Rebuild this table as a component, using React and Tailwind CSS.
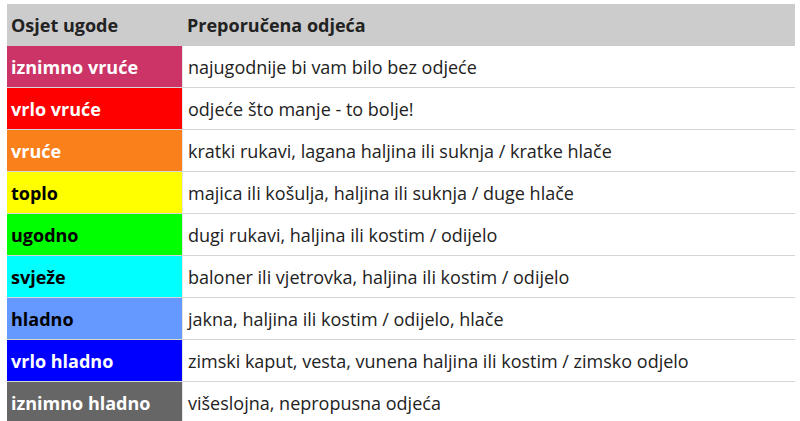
import React from "react";

const rows = [
  { label: "iznimno vruće", bg: "bg-[#cc3366]", fg: "text-white", text: "najugodnije bi vam bilo bez odjeće" },
  { label: "vrlo vruće", bg: "bg-[#ff0000]", fg: "text-white", text: "odjeće što manje - to bolje!" },
  { label: "vruće", bg: "bg-[#fa801c]", fg: "text-white", text: "kratki rukavi, lagana haljina ili suknja / kratke hlače" },
  { label: "toplo", bg: "bg-[#ffff00]", fg: "text-black", text: "majica ili košulja, haljina ili suknja / duge hlače" },
  { label: "ugodno", bg: "bg-[#00ff00]", fg: "text-black", text: "dugi rukavi, haljina ili kostim / odijelo" },
  { label: "svježe", bg: "bg-[#00ffff]", fg: "text-black", text: "baloner ili vjetrovka, haljina ili kostim / odijelo" },
  { label: "hladno", bg: "bg-[#6699ff]", fg: "text-black", text: "jakna, haljina ili kostim / odijelo, hlače" },
  { label: "vrlo hladno", bg: "bg-[#0000ff]", fg: "text-white", text: "zimski kaput, vesta, vunena haljina ili kostim / zimsko odjelo" },
  { label: "iznimno hladno", bg: "bg-[#666666]", fg: "text-white", text: "višeslojna, nepropusna odjeća" },
];

export default function App() {
  return (
    <div className="w-[800px] h-[421px] overflow-hidden bg-white pt-[4px] pl-[7px]" style={{ fontFamily: '"Open Sans", "Noto Sans", sans-serif' }}>
      <div className="w-[788px] text-[18px] leading-[24px] text-[#222]">
        <div className="flex h-[42px] bg-[#cccccc] font-bold items-center">
          <div className="w-[175px] pl-[4px]">Osjet ugode</div>
          <div className="flex-1 pl-[5px]">Preporučena odjeća</div>
        </div>
        {rows.map((r) => (
          <div key={r.label} className="flex h-[42px] border-b-[1px] border-[#d6d6d6]">
            <div className={`w-[175px] ${r.bg} ${r.fg} font-bold flex items-center pl-[4px]`}>{r.label}</div>
            <div className="flex-1 flex items-center pl-[5px] border-l border-[#e6e6e6]">{r.text}</div>
          </div>
        ))}
      </div>
    </div>
  );
}
